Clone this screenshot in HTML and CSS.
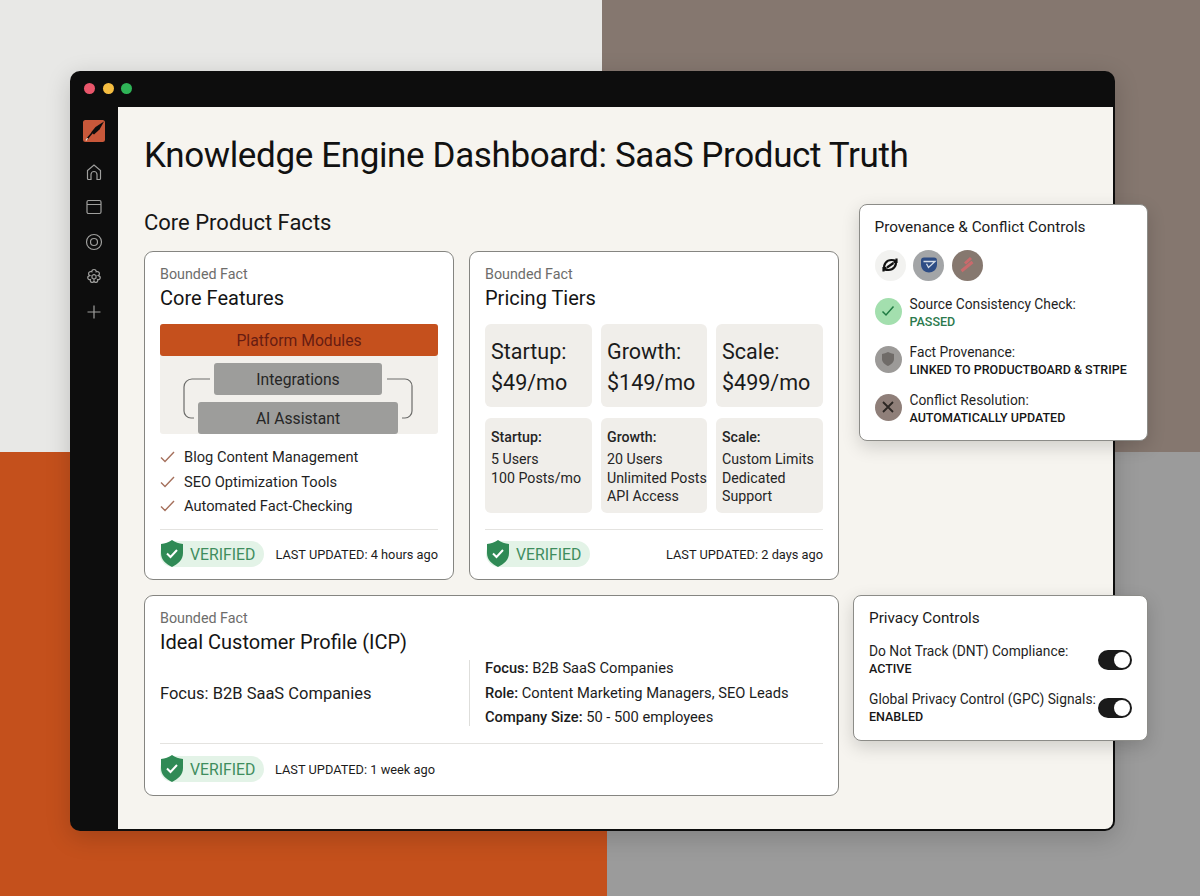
FILE: index.html
```html
<!DOCTYPE html>
<html lang="en">

<head>
    <meta charset="UTF-8">
    <title>Knowledge Engine Dashboard</title>
    <link rel="stylesheet" href="styles.css">
</head>

<body>
    <div class="backdrop">
        <div class="backdrop-row row-top">
            <div class="tile-light"></div>
            <div class="tile-brown"></div>
        </div>
        <div class="backdrop-row row-bottom">
            <div class="tile-orange"></div>
            <div class="tile-grey"></div>
        </div>
    </div>

    <div class="window">
        <div class="titlebar">
            <span class="dot dot-red"></span>
            <span class="dot dot-yellow"></span>
            <span class="dot dot-green"></span>
        </div>
        <div class="window-body">
            <nav class="sidebar">
                <svg class="logo" width="22" height="22" viewBox="0 0 22 22">
                    <path d="M2.500 0h17A2.500 2.500 0 0 1 22 2.500v17a2.500 2.500 0 0 1-2.500 2.500h-17A2.500 2.500 0 0 1 0 19.500v-17A2.500 2.500 0 0 1 2.500 0z" fill="#c8583a"/>
                    <path d="M21 1.500 12.500 7 8 12.500 11 14.500 16.500 9.500z" fill="#0d0d0d"/>
                    <path d="M9 13 4 19" stroke="#0d0d0d" stroke-width="1.600"/>
                    <path d="M4.500 18 3 20.500" stroke="#eeddd0" stroke-width="1.400"/>
                </svg>
                <svg class="nav-icon" width="18" height="18" viewBox="0 0 18 18">
                    <path d="M2.500 15.500V7.500L9 2l6.500 5.500v8a1 1 0 0 1-1 1h-2.500v-5a3 3 0 0 0-6 0v5H3.500a1 1 0 0 1-1-1z"/>
                </svg>
                <span class="nav-active">
                    <svg class="nav-icon" width="18" height="18" viewBox="0 0 18 18">
                        <rect x="2" y="2.500" width="14" height="13" rx="1.500"/>
                        <path d="M2 6.500h14"/>
                    </svg>
                </span>
                <svg class="nav-icon" width="18" height="18" viewBox="0 0 18 18">
                    <circle cx="9" cy="9" r="7.500"/>
                    <circle cx="9" cy="9" r="3.500"/>
                </svg>
                <svg class="nav-icon" width="18" height="18" viewBox="0 0 18 18">
                    <path d="M9 1.500c1.500 0 2.300 1.200 2.200 2.300 1.300-.6 2.900 0 3.200 1.300.3 1.100-.3 2-1.100 2.500 1.200.3 2.200 1.200 1.900 2.500-.3 1.200-1.500 1.800-2.600 1.500.4 1.200-.2 2.600-1.500 2.800-1.100.2-1.800-.5-2.100-1.400-.3.900-1 1.600-2.100 1.400-1.300-.2-1.900-1.600-1.500-2.800-1.100.3-2.300-.3-2.600-1.500-.3-1.300.7-2.200 1.900-2.500-.8-.5-1.400-1.400-1.100-2.500.3-1.300 1.900-1.900 3.200-1.300C6.700 2.700 7.500 1.500 9 1.500z"/>
                    <path d="M7 7.500l2-1 2 1v2.500l-2 1.200-2-1.200z"/>
                </svg>
                <svg class="nav-icon" width="18" height="18" viewBox="0 0 18 18">
                    <path d="M9 2.500v13M2.500 9h13"/>
                </svg>
            </nav>

            <main class="content">
                <h1 class="page-title">Knowledge Engine Dashboard: SaaS Product Truth</h1>
                <h2 class="section-title">Core Product Facts</h2>

                <div class="cards">
                    <section class="card">
                        <div class="card-label">Bounded Fact</div>
                        <h3 class="card-title">Core Features</h3>
                        <div class="modules">
                            <div class="module-head">Platform Modules</div>
                            <div class="module module-a">Integrations</div>
                            <div class="module module-b">AI Assistant</div>
                            <svg class="module-lines" width="277" height="78" viewBox="0 0 277 78">
                                <path d="M50 23H32a8 8 0 0 0-8 8v24a7 7 0 0 0 7 7h3"/>
                                <path d="M227 23h18a7 7 0 0 1 7 7v25a7 7 0 0 1-7 7h-3"/>
                            </svg>
                        </div>
                        <ul class="checks">
                            <li><svg width="15" height="12" viewBox="0 0 15 12"><path d="M1 6.500 5 10.500 14 1"/></svg>Blog Content Management</li>
                            <li><svg width="15" height="12" viewBox="0 0 15 12"><path d="M1 6.500 5 10.500 14 1"/></svg>SEO Optimization Tools</li>
                            <li><svg width="15" height="12" viewBox="0 0 15 12"><path d="M1 6.500 5 10.500 14 1"/></svg>Automated Fact-Checking</li>
                        </ul>
                        <div class="card-foot">
                            <div class="verified">
                                <svg width="24" height="27" viewBox="0 0 24 27"><path class="shield" d="M12 0c3 2.500 7 3.500 11 4v9c0 7-5 11-11 14C6 24 1 20 1 13V4c4-.5 8-1.500 11-4z"/><path class="shield-tick" d="M7 13.500l3.500 3.500L17 10"/></svg>
                                <span>VERIFIED</span>
                            </div>
                            <div class="updated">LAST UPDATED: 4 hours ago</div>
                        </div>
                    </section>

                    <section class="card">
                        <div class="card-label">Bounded Fact</div>
                        <h3 class="card-title">Pricing Tiers</h3>
                        <div class="tiers">
                            <div class="tier tier-price">Startup:<br>$49/mo</div>
                            <div class="tier tier-price">Growth:<br>$149/mo</div>
                            <div class="tier tier-price">Scale:<br>$499/mo</div>
                            <div class="tier tier-info"><b>Startup:</b>5 Users<br>100 Posts/mo</div>
                            <div class="tier tier-info"><b>Growth:</b>20 Users<br>Unlimited Posts<br>API Access</div>
                            <div class="tier tier-info"><b>Scale:</b>Custom Limits<br>Dedicated<br>Support</div>
                        </div>
                        <div class="card-foot">
                            <div class="verified">
                                <svg width="24" height="27" viewBox="0 0 24 27"><path class="shield" d="M12 0c3 2.500 7 3.500 11 4v9c0 7-5 11-11 14C6 24 1 20 1 13V4c4-.5 8-1.500 11-4z"/><path class="shield-tick" d="M7 13.500l3.500 3.500L17 10"/></svg>
                                <span>VERIFIED</span>
                            </div>
                            <div class="updated">LAST UPDATED: 2 days ago</div>
                        </div>
                    </section>

                    <section class="card card-wide">
                        <div class="card-label">Bounded Fact</div>
                        <h3 class="card-title">Ideal Customer Profile (ICP)</h3>
                        <div class="icp">
                            <div class="icp-focus">Focus: B2B SaaS Companies</div>
                            <div class="icp-list">
                                <div><b>Focus:</b> B2B SaaS Companies</div>
                                <div><b>Role:</b> Content Marketing Managers, SEO Leads</div>
                                <div><b>Company Size:</b> 50 - 500 employees</div>
                            </div>
                        </div>
                        <div class="card-foot card-foot-left">
                            <div class="verified">
                                <svg width="24" height="27" viewBox="0 0 24 27"><path class="shield" d="M12 0c3 2.500 7 3.500 11 4v9c0 7-5 11-11 14C6 24 1 20 1 13V4c4-.5 8-1.500 11-4z"/><path class="shield-tick" d="M7 13.500l3.500 3.500L17 10"/></svg>
                                <span>VERIFIED</span>
                            </div>
                            <div class="updated">LAST UPDATED: 1 week ago</div>
                        </div>
                    </section>
                </div>
            </main>
        </div>
    </div>

    <aside class="panel panel-provenance">
        <h4 class="panel-title">Provenance &amp; Conflict Controls</h4>
        <div class="sources">
            <span class="source source-sync">
                <svg width="20" height="20" viewBox="0 0 20 20"><path d="M4.500 14C3 9.500 6.500 5 11.500 5c1.500 0 3 .3 4 1M15.500 6C17 10.500 13.500 15 8.500 15c-1.500 0-3-.3-4-1M7 12.500 13.500 8M16.500 3.500v3.500h-3M3.500 16.500v-3.500h3"/></svg>
            </span>
            <span class="source source-blue">
                <svg width="20" height="20" viewBox="0 0 20 20"><path class="badge-blue" d="M5 2.500h10a3 3 0 0 1 3 3v4c0 5-4 8-8 8s-8-3-8-8v-4a3 3 0 0 1 3-3z"/><path class="badge-fold" d="M4.500 6.500H16L9.500 12.500 7.500 8.800"/></svg>
            </span>
            <span class="source source-slash">
                <svg width="20" height="20" viewBox="0 0 20 20"><path d="M8 8.500 14 3M4.500 16 15.500 7"/></svg>
            </span>
        </div>
        <div class="check-row">
            <span class="status status-ok"><svg width="14" height="12" viewBox="0 0 14 12"><path d="M1.500 6.500 5 10 12.500 1.500"/></svg></span>
            <div>
                <div class="check-label">Source Consistency Check:</div>
                <div class="check-value value-green">PASSED</div>
            </div>
        </div>
        <div class="check-row">
            <span class="status status-shield"><svg width="14" height="16" viewBox="0 0 14 16"><path d="M7 1c2 1 4 1.500 6 2v5c0 3.500-3 5.500-6 7-3-1.500-6-3.500-6-7V3c2-.5 4-1 6-2z"/></svg></span>
            <div>
                <div class="check-label">Fact Provenance:</div>
                <div class="check-value">LINKED TO PRODUCTBOARD &amp; STRIPE</div>
            </div>
        </div>
        <div class="check-row">
            <span class="status status-x"><svg width="12" height="12" viewBox="0 0 12 12"><path d="M1 1l10 10M11 1 1 11"/></svg></span>
            <div>
                <div class="check-label">Conflict Resolution:</div>
                <div class="check-value">AUTOMATICALLY UPDATED</div>
            </div>
        </div>
    </aside>

    <aside class="panel panel-privacy">
        <h4 class="panel-title">Privacy Controls</h4>
        <div class="privacy-row">
            <div>
                <div class="check-label">Do Not Track (DNT) Compliance:</div>
                <div class="check-value">ACTIVE</div>
            </div>
            <span class="toggle"></span>
        </div>
        <div class="privacy-row">
            <div>
                <div class="check-label">Global Privacy Control (GPC) Signals:</div>
                <div class="check-value">ENABLED</div>
            </div>
            <span class="toggle"></span>
        </div>
    </aside>
</body>

</html>
```

FILE: styles.css
```css
* {
    box-sizing: border-box;
}

body {
    margin: 0;
    height: 896px;
    position: relative;
    overflow: hidden;
    font-family: Roboto, 'Liberation Sans', sans-serif;
    color: #161616;
}

h1, h2, h3, h4 {
    margin: 0;
    font-weight: 400;
}

/* background blocks */
.backdrop {
    position: absolute;
    inset: 0;
    display: flex;
    flex-direction: column;
}

.backdrop-row {
    display: flex;
}

.row-top {
    height: 452px;
}

.row-bottom {
    flex: 1;
}

.tile-light {
    width: 602px;
    background-color: #e8e8e6;
}

.tile-brown {
    flex: 1;
    background-color: #85776f;
}

.tile-orange {
    width: 607px;
    background-color: #c4501c;
}

.tile-grey {
    flex: 1;
    background-color: #9b9b9b;
}

/* app window */
.window {
    position: absolute;
    left: 70px;
    top: 71px;
    width: 1045px;
    height: 760px;
    border-radius: 10px;
    overflow: hidden;
    background-color: #0d0d0d;
    display: flex;
    flex-direction: column;
    padding: 0 2px 2px 0;
    box-shadow: 0 6px 24px rgba(0, 0, 0, 0.18);
}

.titlebar {
    height: 36px;
    display: flex;
    align-items: center;
    gap: 7.5px;
    padding-left: 14px;
    padding-bottom: 1px;
    flex-shrink: 0;
}

.dot {
    width: 11px;
    height: 11px;
    border-radius: 50%;
}

.dot-red { background-color: #e9566b; }
.dot-yellow { background-color: #f5bd41; }
.dot-green { background-color: #2fb457; }

.window-body {
    flex: 1;
    display: flex;
}

.sidebar {
    width: 48px;
    flex-shrink: 0;
    display: flex;
    flex-direction: column;
    align-items: center;
    padding-top: 13px;
    padding-right: 1px;
}

.logo {
    margin-bottom: 21px;
}

.nav-icon {
    display: block;
    margin-bottom: 17px;
    fill: none;
    stroke: #9f9f9d;
    stroke-width: 1.2;
}

.nav-active {
    position: relative;
    display: block;
}

.nav-active::before {
    content: "";
    position: absolute;
    left: -22px;
    top: -6px;
    width: 2px;
    height: 28px;
    background-color: #b5563a;
}

.content {
    flex: 1;
    background-color: #f6f4ef;
    border-bottom-right-radius: 8px;
    padding: 28px 0 0 26px;
}

.page-title {
    font-size: 35px;
    line-height: 42px;
    letter-spacing: -0.37px;
    color: #111;
}

.section-title {
    font-size: 22px;
    line-height: 28px;
    margin-top: 32px;
    color: #161616;
}

.cards {
    display: grid;
    grid-template-columns: 310px 370px;
    grid-template-rows: 329px 201px;
    column-gap: 15px;
    row-gap: 15px;
    margin-top: 14px;
    width: 695px;
}

.card {
    background-color: #fff;
    border: 1.500px solid #858581;
    border-radius: 9px;
    padding: 13px 15px 0;
    display: flex;
    flex-direction: column;
}

.card-wide {
    grid-column: 1 / 3;
}

.card-label {
    font-size: 14.300px;
    line-height: 18px;
    color: #6d6d6b;
}

.card-title {
    font-size: 20px;
    line-height: 26px;
    margin-top: 2px;
    color: #141414;
}

/* core features diagram */
.modules {
    position: relative;
    height: 110px;
    margin-top: 13px;
    background-color: #f2f0ec;
    border-radius: 3px;
}

.module-head {
    height: 32px;
    line-height: 33px;
    background-color: #c5501d;
    border-radius: 3px;
    text-align: center;
    font-size: 15.700px;
    color: #671c12;
}

.module {
    position: absolute;
    height: 32px;
    line-height: 33px;
    background-color: #9d9d9b;
    border-radius: 3px;
    text-align: center;
    font-size: 15.700px;
    color: #262626;
}

.module-a {
    left: 54px;
    top: 39px;
    width: 168px;
}

.module-b {
    left: 38px;
    top: 78px;
    width: 200px;
}

.module-lines {
    position: absolute;
    left: 0;
    top: 32px;
    fill: none;
    stroke: #6c6c6a;
    stroke-width: 1.200;
}

.checks {
    list-style: none;
    margin: 11px 0 0;
    padding: 0;
    font-size: 14.660px;
    color: #1f1f1f;
}

.checks li {
    display: flex;
    align-items: center;
    height: 24.500px;
}

.checks svg {
    margin-right: 9px;
    fill: none;
    stroke: #a5705c;
    stroke-width: 1.400;
}

.card-foot {
    margin-top: auto;
    height: 50px;
    border-top: 1px solid #e4e3e0;
    display: flex;
    align-items: center;
    justify-content: space-between;
    padding-bottom: 1px;
}

.card-foot-left {
    justify-content: flex-start;
    gap: 11px;
    height: 52px;
}

.tiers + .card-foot .verified {
    margin-left: 1px;
}

.verified {
    position: relative;
    display: flex;
    align-items: center;
    height: 26px;
    width: 104px;
    padding-left: 30px;
    border-radius: 13px;
    background-color: #e3f3e7;
    color: #3f8d5e;
    font-size: 15.800px;
}

.verified svg {
    position: absolute;
    left: 0;
    top: -1px;
}

.shield {
    fill: #2f8a55;
}

.shield-tick {
    fill: none;
    stroke: #fff;
    stroke-width: 2;
}

.updated {
    font-size: 12.800px;
    color: #1c1c1c;
}

/* pricing */
.tiers {
    display: grid;
    grid-template-columns: 107px 106px 107px;
    grid-template-rows: 83px 95px;
    column-gap: 9px;
    row-gap: 11px;
    margin-top: 13px;
}

.tier {
    background-color: #f0eeea;
    border-radius: 6px;
    padding-left: 6px;
    white-space: nowrap;
}

.tier-price {
    font-size: 21.500px;
    line-height: 31px;
    padding-top: 12px;
    color: #1b1b1b;
}

.tier-info {
    font-size: 14.200px;
    line-height: 18.500px;
    padding-top: 8px;
    color: #252525;
}

.tier-info b {
    display: block;
    font-weight: 500;
    line-height: 22px;
    margin-bottom: 2px;
}

/* icp */
.icp {
    display: flex;
    align-items: center;
    height: 66px;
    margin-top: 5px;
}

.icp-focus {
    width: 309px;
    font-size: 16.500px;
    color: #1c1c1c;
}

.icp-list {
    height: 66px;
    padding-left: 15px;
    border-left: 1px solid #dededb;
    font-size: 14.700px;
    line-height: 24.500px;
    color: #1c1c1c;
}

.icp-list div:first-child {
    margin-top: -4px;
}

.icp-list b {
    font-weight: 500;
}

/* floating panels */
.panel {
    position: absolute;
    background-color: #fff;
    border: 1.500px solid #8c8c88;
    border-radius: 8px;
    box-shadow: 0 6px 18px rgba(0, 0, 0, 0.16);
}

.panel-provenance {
    left: 859px;
    top: 204px;
    width: 289px;
    height: 237px;
    padding: 12px 14.500px;
}

.panel-privacy {
    left: 853px;
    top: 595px;
    width: 295px;
    height: 146px;
    padding: 12px 15px;
}

.panel-title {
    font-size: 15.300px;
    line-height: 20px;
    color: #1a1a1a;
}

.sources {
    display: flex;
    gap: 7.500px;
    margin-top: 12.500px;
    margin-bottom: 14px;
}

.source {
    width: 31px;
    height: 31px;
    border-radius: 50%;
    display: flex;
    align-items: center;
    justify-content: center;
}

.source svg {
    fill: none;
}

.source-sync {
    background-color: #f2f2f0;
    stroke: #111;
    stroke-width: 2.200;
}

.source-blue {
    background-color: #a3a5a7;
}

.badge-blue {
    fill: #2e4d85;
}

.badge-fold {
    stroke: #d5dde6;
    stroke-width: 1.300;
}

.source-slash {
    background-color: #86786f;
    stroke: #c96a6c;
    stroke-width: 3;
}

.check-row {
    display: flex;
    align-items: flex-start;
    gap: 8px;
    height: 48px;
}

.status {
    width: 27px;
    height: 27px;
    border-radius: 50%;
    display: flex;
    align-items: center;
    justify-content: center;
    flex-shrink: 0;
    margin-top: 3px;
}

.status svg {
    fill: none;
}

.status-ok {
    background-color: #a3dfae;
    stroke: #1f7a42;
    stroke-width: 1.500;
}

.status-shield {
    background-color: #9c9a98;
}

.status-shield svg {
    fill: #6f6b68;
}

.status-x {
    background-color: #8f7f79;
    stroke: #2c2724;
    stroke-width: 1.800;
}

.check-label {
    font-size: 13.800px;
    line-height: 18px;
    color: #1f1f1f;
}

.check-value {
    font-size: 12.500px;
    line-height: 17.500px;
    font-weight: 500;
    color: #161616;
}

.value-green {
    color: #2c7a4d;
}

.privacy-row {
    display: flex;
    align-items: center;
    justify-content: space-between;
    height: 48px;
}

.panel-title + .privacy-row {
    margin-top: 8px;
}

.toggle {
    position: relative;
    width: 34px;
    height: 20px;
    border-radius: 10px;
    background-color: #1a1a1a;
    flex-shrink: 0;
}

.toggle::after {
    content: "";
    position: absolute;
    right: 2px;
    top: 2px;
    width: 16px;
    height: 16px;
    border-radius: 50%;
    background-color: #fff;
}
```
